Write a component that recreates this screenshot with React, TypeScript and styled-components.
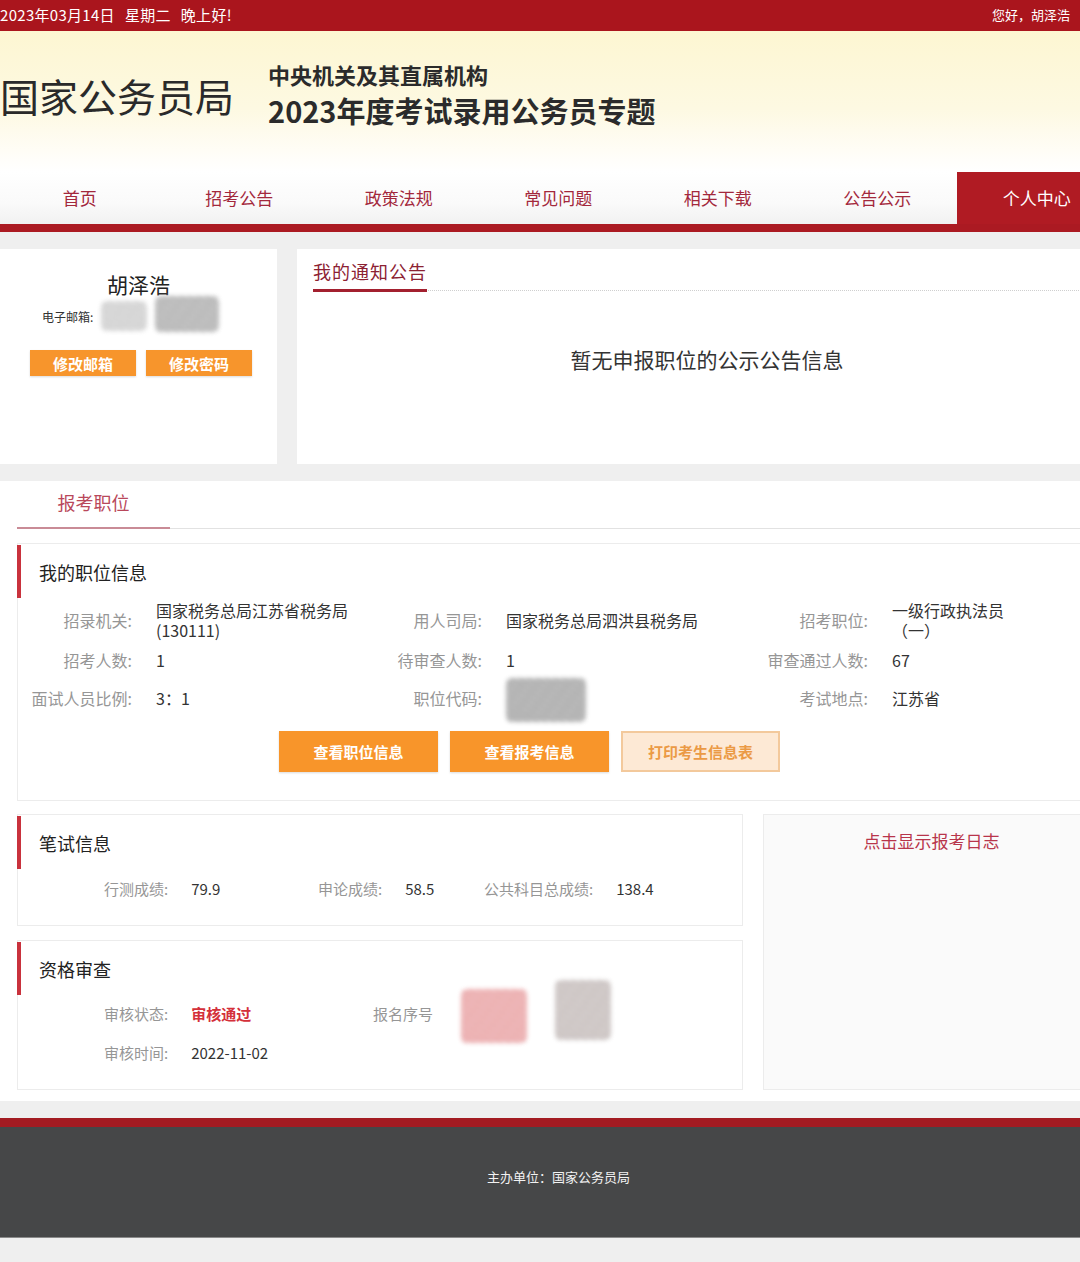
import styled, { createGlobalStyle, css } from "styled-components";

const GlobalStyle = createGlobalStyle`
    html, body {
        margin: 0;
        padding: 0;
        background: #efefef;
        overflow-x: hidden;
    }
    body {
        font-family: "Noto Sans CJK SC", "Noto Sans", "Liberation Sans", sans-serif;
        color: #333;
    }
    * { box-sizing: border-box; }
`

const TopBar = styled.div`
    height: 31px;
    background: #aa151d;
    color: #fff;
    display: flex;
    justify-content: space-between;
    align-items: center;
    padding: 0 10px 2px 0;
    font-size: 15px;
    .greet{
        font-size: 13px;
    }
    .date{
        letter-spacing: 0.3px;
    }
    .date span{
        margin-left: 10px;
    }
`

const Page = styled.div`
    width: 1117px;
`

const Header = styled.header`
    height: 141px;
    display: flex;
    gap: 34px;
    padding-top: 29px;
    background: linear-gradient(180deg, #fdf6d2 0%, #fdf9e2 55%, #fffdf6 85%, #ffffff 100%);
`

const Logo = styled.div`
    margin-top: 12px;
    font-size: 39px;
    line-height: 47px;
    color: #2a2a2a;
    height: 47px;
`

const TitleBlock = styled.div`
    display: flex;
    flex-direction: column;
    gap: 4px;
    color: #2b2b2b;
    font-weight: 700;
    .sub{
        font-size: 22px;
        line-height: 28px;
    }
    .main{
        font-size: 29px;
        line-height: 36px;
    }
`

const Nav = styled.nav`
    display: grid;
    grid-template-columns: repeat(7, 159.5px);
    height: 52px;
    background: linear-gradient(180deg, #ffffff 0%, #fafafa 60%, #f1f1f1 100%);
    border-bottom: 8px solid #ab1a22;
    box-sizing: content-box;
`

const NavItem = styled.a<{ $active?: boolean }>`
    display: flex;
    align-items: center;
    justify-content: center;
    font-size: 17px;
    color: #a3283c;
    text-decoration: none;
    padding-bottom: 2px;
    ${p => p.$active && css`
        background: #b01b23;
        color: #fff;
    `}
`

const TopPanels = styled.div`
    display: grid;
    grid-template-columns: 277px 1fr;
    gap: 20px;
    padding: 17px 0;
`

const Panel = styled.div`
    background: #fff;
    height: 215px;
`

const ProfilePanel = styled(Panel)`
    padding-top: 21px;
    .name{
        text-align: center;
        font-size: 21px;
        line-height: 28px;
        color: #222;
    }
`

const EmailRow = styled.div`
    margin-top: 9px;
    height: 18px;
    padding-left: 42px;
    display: flex;
    align-items: center;
    gap: 8px;
    font-size: 12px;
    color: #333;
`

const Smudge = styled.div<{ $w: number; $h: number; $tone: string; $shift?: number }>`
    width: ${p => p.$w}px;
    height: ${p => p.$h}px;
    flex: none;
    margin: ${p => -p.$h / 2 + 10 + (p.$shift || 0)}px 0 ${p => -p.$h / 2 + 10 - (p.$shift || 0)}px;
    background:
        repeating-linear-gradient(35deg, rgba(255,255,255,0.4) 0 2px, transparent 2px 5px),
        repeating-linear-gradient(-50deg, rgba(0,0,0,0.08) 0 1px, transparent 1px 3px),
        ${p => p.$tone};
    filter: blur(2px);
    border-radius: 6px;
    opacity: 0.85;
`

const SmallButtons = styled.div`
    margin-top: 25px;
    padding-left: 30px;
    display: flex;
    gap: 10px;
`

const SmallButton = styled.button`
    width: 106px;
    height: 26px;
    border: none;
    background: #f7952c;
    color: #fff;
    font-family: inherit;
    font-size: 15px;
    font-weight: 700;
    padding: 0;
    box-shadow: 0 1px 2px rgba(0,0,0,0.15);
`

const NoticePanel = styled(Panel)`
    padding-left: 16px;
`

const NoticeTabs = styled.div`
    padding-top: 9px;
    display: flex;
    border-bottom: 1px dotted #cfcfcf;
`

const NoticeTab = styled.div`
    font-size: 18px;
    line-height: 26px;
    letter-spacing: 1px;
    color: #8c2132;
    padding-bottom: 5px;
    border-bottom: 3px solid #a3202f;
    margin-bottom: -2px;
`

const EmptyText = styled.div`
    margin-top: 53px;
    text-align: center;
    font-size: 21px;
    line-height: 30px;
    color: #333;
    padding-right: 16px;
`

const Section = styled.section`
    background: #fff;
    padding: 0 17px 11px;
`

const SectionTabs = styled.div`
    display: flex;
    border-bottom: 1px solid #e2e2e2;
`

const SectionTab = styled.div`
    width: 153px;
    text-align: center;
    font-size: 18px;
    line-height: 26px;
    padding: 8px 0 12px;
    color: #b9485b;
    border-bottom: 2px solid #c98b96;
    margin-bottom: -1px;
`

const Card = styled.div`
    border: 1px solid #ececec;
    background: #fff;
`

const CardTitle = styled.div`
    position: relative;
    margin-top: 1px;
    height: 53px;
    display: flex;
    align-items: center;
    padding-left: 21px;
    font-size: 18px;
    color: #222;
    &::before{
        content: "";
        position: absolute;
        left: -1px;
        top: 0;
        bottom: 0;
        width: 4px;
        background: #c9323d;
    }
`

const JobCard = styled(Card)`
    margin-top: 14px;
`

const InfoGrid = styled.div`
    margin-top: 2px;
    padding-left: 7px;
    display: grid;
    grid-template-columns: 107px 210px 92px 226px 112px 1fr;
    grid-template-rows: 40px 40px 36px;
    column-gap: 24px;
    align-items: center;
    font-size: 16px;
    line-height: 20px;
`

const Label = styled.div`
    color: #969696;
    text-align: right;
    white-space: nowrap;
`

const Value = styled.div`
    color: #333;
    white-space: nowrap;
`

const ActionRow = styled.div`
    margin-top: 15px;
    padding: 0 0 28px 261px;
    display: flex;
    gap: 12px;
`

const ActionButton = styled.button<{ $light?: boolean }>`
    width: 159px;
    height: 41px;
    font-family: inherit;
    font-size: 15px;
    font-weight: 700;
    padding: 0;
    border: none;
    background: #f8952a;
    color: #fff;
    box-shadow: 0 1px 2px rgba(0,0,0,0.15);
    ${p => p.$light && css`
        background: #fde9d5;
        color: #eb9a45;
        border: 2px solid #f3c99c;
        box-shadow: none;
    `}
`

const LowerGrid = styled.div`
    margin-top: 13px;
    display: grid;
    grid-template-columns: 726px 337px;
    gap: 20px;
`

const Stack = styled.div`
    display: flex;
    flex-direction: column;
    gap: 14px;
`

const ScoreRow = styled.div`
    margin-top: 10px;
    padding: 0 0 26px 86px;
    display: grid;
    grid-template-columns: 214px 166px auto;
    font-size: 15px;
    line-height: 20px;
`

const Field = styled.div`
    display: flex;
    gap: 23px;
    align-items: center;
    height: 20px;
    .label{
        color: #969696;
    }
    .value{
        color: #333;
    }
    .pass{
        color: #d4303a;
        font-weight: 700;
    }
`

const CheckGrid = styled.div`
    margin-top: 9px;
    padding: 0 0 26px 86px;
    display: grid;
    grid-template-columns: 269px auto;
    row-gap: 19px;
    font-size: 15px;
    line-height: 20px;
`

const SerialField = styled(Field)`
    gap: 28px;
`

const LogPanel = styled.div`
    background: #fafafa;
    border: 1px solid #ececec;
    text-align: center;
    padding-top: 14px;
    font-size: 17px;
    line-height: 24px;
    color: #b8354b;
`

const Footer = styled.footer`
    margin-top: 17px;
    border-top: 9px solid #a31b22;
    background: #464748;
    height: 120px;
    display: flex;
    align-items: center;
    justify-content: center;
    color: #f2f2f2;
    font-size: 13px;
    padding-bottom: 12px;
    border-bottom: 1px solid #8a8a8a;
`

const navItems = ["首页", "招考公告", "政策法规", "常见问题", "相关下载", "公告公示", "个人中心"]

const App = () => {
    return <>
        <GlobalStyle />
        <TopBar>
            <div className="date">2023年03月14日<span>星期二</span><span>晚上好!</span></div>
            <div className="greet">您好，胡泽浩</div>
        </TopBar>
        <Page>
            <Header>
                <Logo>国家公务员局</Logo>
                <TitleBlock>
                    <div className="sub">中央机关及其直属机构</div>
                    <div className="main">2023年度考试录用公务员专题</div>
                </TitleBlock>
            </Header>
            <Nav>
                {navItems.map((item, i) => <NavItem key={item} $active={i === navItems.length - 1}>{item}</NavItem>)}
            </Nav>
            <TopPanels>
                <ProfilePanel>
                    <div className="name">胡泽浩</div>
                    <EmailRow>
                        <span>电子邮箱:</span>
                        <Smudge $w={46} $h={30} $tone="#cdcdcd" />
                        <Smudge $w={64} $h={36} $tone="#a8a8a8" $shift={-2} />
                    </EmailRow>
                    <SmallButtons>
                        <SmallButton>修改邮箱</SmallButton>
                        <SmallButton>修改密码</SmallButton>
                    </SmallButtons>
                </ProfilePanel>
                <NoticePanel>
                    <NoticeTabs>
                        <NoticeTab>我的通知公告</NoticeTab>
                    </NoticeTabs>
                    <EmptyText>暂无申报职位的公示公告信息</EmptyText>
                </NoticePanel>
            </TopPanels>
            <Section>
                <SectionTabs>
                    <SectionTab>报考职位</SectionTab>
                </SectionTabs>
                <JobCard>
                    <CardTitle>我的职位信息</CardTitle>
                    <InfoGrid>
                        <Label>招录机关:</Label>
                        <Value>国家税务总局江苏省税务局<br />(130111)</Value>
                        <Label>用人司局:</Label>
                        <Value>国家税务总局泗洪县税务局</Value>
                        <Label>招考职位:</Label>
                        <Value>一级行政执法员<br />（一）</Value>

                        <Label>招考人数:</Label>
                        <Value>1</Value>
                        <Label>待审查人数:</Label>
                        <Value>1</Value>
                        <Label>审查通过人数:</Label>
                        <Value>67</Value>

                        <Label>面试人员比例:</Label>
                        <Value>3：1</Value>
                        <Label>职位代码:</Label>
                        <Value><Smudge $w={80} $h={44} $tone="#9d9d9d" $shift={2} /></Value>
                        <Label>考试地点:</Label>
                        <Value>江苏省</Value>
                    </InfoGrid>
                    <ActionRow>
                        <ActionButton>查看职位信息</ActionButton>
                        <ActionButton>查看报考信息</ActionButton>
                        <ActionButton $light>打印考生信息表</ActionButton>
                    </ActionRow>
                </JobCard>
                <LowerGrid>
                    <Stack>
                        <Card>
                            <CardTitle>笔试信息</CardTitle>
                            <ScoreRow>
                                <Field><span className="label">行测成绩:</span><span className="value">79.9</span></Field>
                                <Field><span className="label">申论成绩:</span><span className="value">58.5</span></Field>
                                <Field><span className="label">公共科目总成绩:</span><span className="value">138.4</span></Field>
                            </ScoreRow>
                        </Card>
                        <Card>
                            <CardTitle>资格审查</CardTitle>
                            <CheckGrid>
                                <Field><span className="label">审核状态:</span><span className="pass">审核通过</span></Field>
                                <SerialField>
                                    <span className="label">报名序号</span>
                                    <Smudge $w={66} $h={54} $tone="#ec9a9c" $shift={2} />
                                    <Smudge $w={56} $h={60} $tone="#c2b8b6" $shift={-4} />
                                </SerialField>
                                <Field><span className="label">审核时间:</span><span className="value">2022-11-02</span></Field>
                            </CheckGrid>
                        </Card>
                    </Stack>
                    <LogPanel>点击显示报考日志</LogPanel>
                </LowerGrid>
            </Section>
            <Footer>主办单位：国家公务员局</Footer>
        </Page>
    </>
}

export default App
